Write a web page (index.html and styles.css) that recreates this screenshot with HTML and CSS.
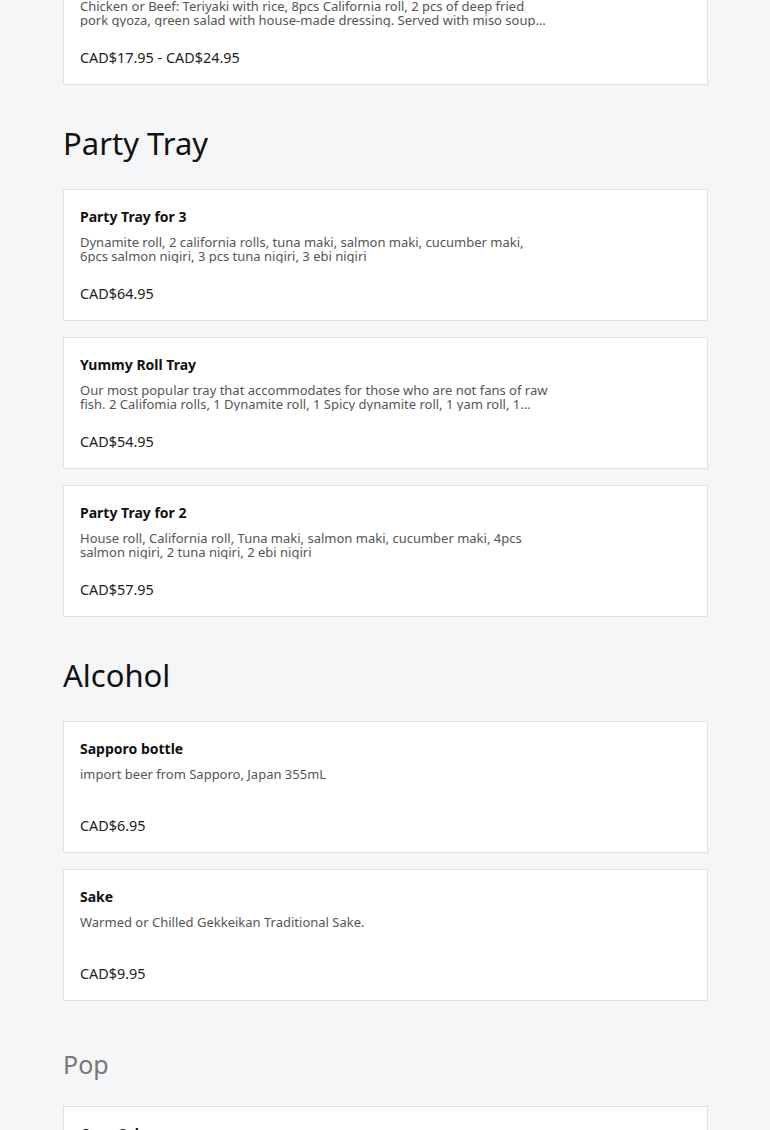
FILE: index.html
```html
<!DOCTYPE html>
<html lang="en">
<head>
<meta charset="utf-8">
<title>Menu</title>
<link rel="stylesheet" href="styles.css">
</head>
<body>
<main class="menu">
  <section class="category">
    <div class="items">
      <article class="item">
        <h3 class="item-name">Bento Box</h3>
        <p class="item-desc">Chicken or Beef: Teriyaki with rice, 8pcs California roll, 2 pcs of deep fried pork gyoza, green salad with house-made dressing. Served with miso soup and a side of edamame.</p>
        <p class="item-price">CAD$17.95 - CAD$24.95</p>
      </article>
    </div>
  </section>

  <section class="category">
    <h2 class="category-title">Party Tray</h2>
    <div class="items">
      <article class="item">
        <h3 class="item-name">Party Tray for 3</h3>
        <p class="item-desc">Dynamite roll, 2 california rolls, tuna maki, salmon maki, cucumber maki, 6pcs salmon nigiri, 3 pcs tuna nigiri, 3 ebi nigiri</p>
        <p class="item-price">CAD$64.95</p>
      </article>
      <article class="item">
        <h3 class="item-name">Yummy Roll Tray</h3>
        <p class="item-desc">Our most popular tray that accommodates for those who are not fans of raw fish. 2 Califomia rolls, 1 Dynamite roll, 1 Spicy dynamite roll, 1 yam roll, 1 cucumber maki, 1 avocado maki</p>
        <p class="item-price">CAD$54.95</p>
      </article>
      <article class="item">
        <h3 class="item-name">Party Tray for 2</h3>
        <p class="item-desc">House roll, California roll, Tuna maki, salmon maki, cucumber maki, 4pcs salmon nigiri, 2 tuna nigiri, 2 ebi nigiri</p>
        <p class="item-price">CAD$57.95</p>
      </article>
    </div>
  </section>

  <section class="category">
    <h2 class="category-title">Alcohol</h2>
    <div class="items">
      <article class="item">
        <h3 class="item-name">Sapporo bottle</h3>
        <p class="item-desc">import beer from Sapporo, Japan 355mL</p>
        <p class="item-price">CAD$6.95</p>
      </article>
      <article class="item">
        <h3 class="item-name">Sake</h3>
        <p class="item-desc">Warmed or Chilled Gekkeikan Traditional Sake.</p>
        <p class="item-price">CAD$9.95</p>
      </article>
    </div>
  </section>

  <section class="category">
    <h2 class="category-title category-title--faded">Pop</h2>
    <div class="items">
      <article class="item">
        <h3 class="item-name">Coca Cola</h3>
        <p class="item-desc">355mL can</p>
        <p class="item-price">CAD$1.95</p>
      </article>
    </div>
  </section>
</main>
</body>
</html>
```

FILE: styles.css
```css
html, body {
  margin: 0;
  padding: 0;
}
body {
  background: #f5f6f8;
  font-family: "Noto Sans", "Liberation Sans", sans-serif;
  color: #111;
  overflow: hidden;
}
.menu {
  width: 645px;
  margin: -47px 0 0 63px;
}
.category-title {
  margin: 38px 0 26px;
  font-size: 31px;
  line-height: 40px;
  font-weight: 400;
  color: #111;
}
.category-title--faded {
  margin: 43px 0 22px;
  font-size: 25px;
  color: #777;
}
.items {
  display: flex;
  flex-direction: column;
  gap: 16px;
}
.item {
  background: #fff;
  border: 1px solid #e1e2e5;
  padding: 16px;
}
.item-name {
  margin: 0;
  font-size: 14px;
  line-height: 22px;
  font-weight: 700;
  color: #111;
}
.item-desc {
  margin: 7px 0 0;
  max-width: 472px;
  height: 28px;
  font-size: 13px;
  line-height: 14px;
  color: #555;
  display: -webkit-box;
  -webkit-line-clamp: 2;
  -webkit-box-orient: vertical;
  overflow: hidden;
}
.item-price {
  margin: 21px 0 0;
  font-size: 14.4px;
  line-height: 20px;
  color: #222;
}
```
